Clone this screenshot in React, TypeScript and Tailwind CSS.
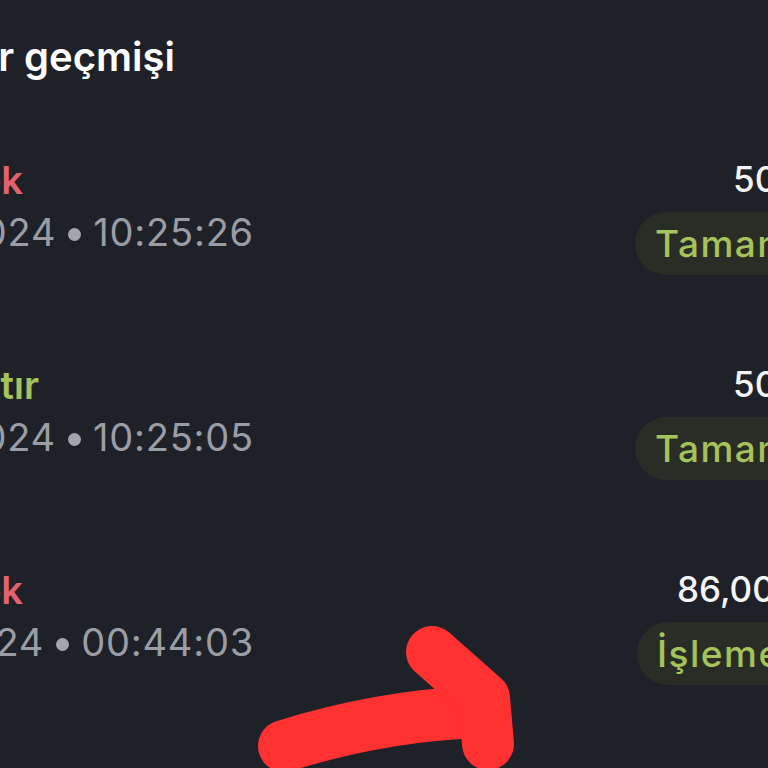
import React from "react";

type Row = {
  kind: string;
  kindTone: "red" | "green";
  kindEnd: number;
  day: string;
  time: string;
  amount: string;
  amountStart: number;
  status: string;
  pillStart: number;
};

const rows: Row[] = [
  {
    kind: "Para çek",
    kindTone: "red",
    kindEnd: 23,
    day: "12.03.2024",
    time: "10:25:26",
    amount: "500,00 ₺",
    amountStart: 733,
    status: "Tamamlandı",
    pillStart: 635,
  },
  {
    kind: "Para yatır",
    kindTone: "green",
    kindEnd: 39,
    day: "12.03.2024",
    time: "10:25:05",
    amount: "500,00 ₺",
    amountStart: 733,
    status: "Tamamlandı",
    pillStart: 635,
  },
  {
    kind: "Para çek",
    kindTone: "red",
    kindEnd: 23,
    day: "11.03.2024",
    time: "00:44:03",
    amount: "86,00 ₺",
    amountStart: 677,
    status: "İşleme alındı",
    pillStart: 637,
  },
];

const toneText = {
  red: "text-[#e2626e]",
  green: "text-[#a6c25b]",
} as const;

function HistoryRow({ row }: { row: Row }) {
  return (
    <div className="flex h-[205px] w-[768px] items-start justify-between">
      <div className="flex flex-col">
        <div className="flex justify-end" style={{ width: row.kindEnd }}>
          <span
            className={`whitespace-nowrap text-[38px] font-semibold leading-[50px] ${toneText[row.kindTone]}`}
          >
            {row.kind}
          </span>
        </div>
        <div className="flex h-[54px] w-[254px] items-center justify-end whitespace-nowrap text-[38px] font-normal tracking-[0.8px] text-[#9b9da5]">
          <span>{row.day}</span>
          <span className="mr-[12px] ml-[12px] mt-[4px] h-[13px] w-[13px] shrink-0 rounded-full bg-[#a3a5ac]" />
          <span>{row.time}</span>
        </div>
      </div>
      <div
        className="flex flex-col items-start"
        style={{ width: 768 - row.pillStart }}
      >
        <span
          className="whitespace-nowrap text-[35px] font-medium leading-[48px] text-[#f4f4f5]"
          style={{ marginLeft: row.amountStart - row.pillStart }}
        >
          {row.amount}
        </span>
        <span className="mt-[9px] flex h-[63px] items-center whitespace-nowrap rounded-full bg-[#2a2d26] pl-[20px] pr-[24px] text-[37px] font-medium tracking-[1.5px] text-[#a6c25b]">
          {row.status}
        </span>
      </div>
    </div>
  );
}

export default function App() {
  return (
    <div
      className="relative h-[768px] w-[768px] overflow-hidden bg-[#1f2128] pt-[32px]"
      style={{ fontFamily: "Inter, 'Noto Sans', sans-serif" }}
    >
      <div className="flex w-[175px] justify-end">
        <h1 className="whitespace-nowrap text-[40px] font-semibold leading-[50px] text-white">
          İşlemler geçmişi
        </h1>
      </div>
      <div className="mt-[73px] flex flex-col">
        {rows.map((row, i) => (
          <HistoryRow key={i} row={row} />
        ))}
      </div>

      {/* hand-drawn annotation arrow */}
      <svg
        className="pointer-events-none absolute inset-0"
        width="768"
        height="768"
        viewBox="0 0 768 768"
      >
        <g
          fill="none"
          stroke="#ff3131"
          strokeWidth="52"
          strokeLinecap="round"
          strokeLinejoin="round"
        >
          <path d="M284 746 Q380 716 476 712" />
          <path d="M432 652 L484 698 L488 744" />
        </g>
      </svg>
    </div>
  );
}
